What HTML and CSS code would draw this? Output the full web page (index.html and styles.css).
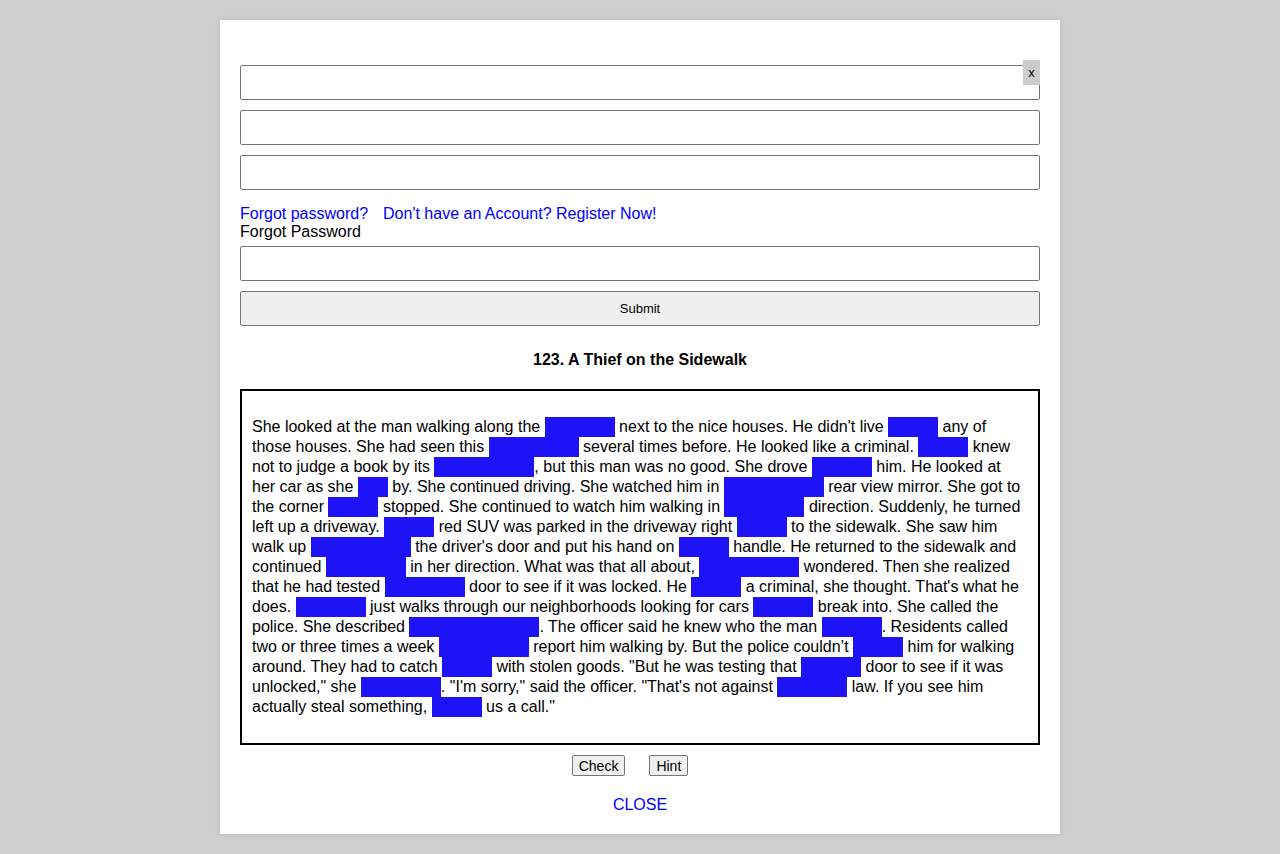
FILE: index.html
```html
<!DOCTYPE html>
<html>
<head>
<meta charset="utf-8">
<link rel="stylesheet" href="styles.css">
</head>
<body>
<div class="modal">
  <button class="x-btn">x</button>
  <input class="field first" type="text">
  <input class="field" type="text">
  <input class="field" type="password">
  <div class="links"><a href="#">Forgot password?</a><a href="#">Don't have an Account? Register Now!</a></div>
  <div class="label">Forgot Password</div>
  <input class="field forgot" type="text">
  <button class="submit">Submit</button>
  <h1 class="title">123. A Thief on the Sidewalk</h1>
  <div class="story">She looked at the man walking along the <span class="blank b70"></span> next to the nice houses. He didn't live <span class="blank b50"></span> any of those houses. She had seen this <span class="blank b90"></span> several times before. He looked like a criminal. <span class="blank b50"></span> knew not to judge a book by its <span class="blank b100"></span>, but this man was no good. She drove <span class="blank b60"></span> him. He looked at her car as she <span class="blank b30"></span> by. She continued driving. She watched him in <span class="blank b100"></span> rear view mirror. She got to the corner <span class="blank b50"></span> stopped. She continued to watch him walking in <span class="blank b80"></span> direction. Suddenly, he turned left up a driveway. <span class="blank b50"></span> red SUV was parked in the driveway right <span class="blank b50"></span> to the sidewalk. She saw him walk up <span class="blank b100"></span> the driver's door and put his hand on <span class="blank b50"></span> handle. He returned to the sidewalk and continued <span class="blank b80"></span> in her direction. What was that all about, <span class="blank b100"></span> wondered. Then she realized that he had tested <span class="blank b80"></span> door to see if it was locked. He <span class="blank b50"></span> a criminal, she thought. That's what he does. <span class="blank b70"></span> just walks through our neighborhoods looking for cars <span class="blank b60"></span> break into. She called the police. She described <span class="blank b130"></span>. The officer said he knew who the man <span class="blank b60"></span>. Residents called two or three times a week <span class="blank b90"></span> report him walking by. But the police couldn’t <span class="blank b50"></span> him for walking around. They had to catch <span class="blank b50"></span> with stolen goods. "But he was testing that <span class="blank b60"></span> door to see if it was unlocked," she <span class="blank b80"></span>. "I'm sorry," said the officer. "That's not against <span class="blank b70"></span> law. If you see him actually steal something, <span class="blank b50"></span> us a call."</div>
  <div class="actions"><button class="small-btn">Check</button><button class="small-btn">Hint</button></div>
  <div class="close-row"><a href="#" class="close-link">CLOSE</a></div>
</div>
</body>
</html>
```
FILE: styles.css
```css
html, body {
  margin: 0;
  padding: 0;
}
body {
  background: #cfcfcf;
  font-family: "Liberation Sans", Arial, sans-serif;
  font-size: 16px;
  color: #000;
}
.modal {
  position: relative;
  width: 800px;
  margin: 20px auto;
  padding: 45px 20px 20px;
  background: #fff;
  box-shadow: 0 0 6px rgba(0,0,0,0.12);
  display: flex;
  flex-direction: column;
}
.x-btn {
  position: absolute;
  top: 40px;
  right: 20px;
  width: 17px;
  height: 25px;
  padding: 0;
  border: none;
  background: #cccccc;
  font-family: "Liberation Sans", Arial, sans-serif;
  font-size: 13px;
  color: #000;
}
.field {
  box-sizing: border-box;
  width: 800px;
  height: 35px;
  margin: 0 0 10px;
  border: 1px solid #767676;
  border-radius: 2px;
  padding: 0 4px;
  font-family: "Liberation Sans", Arial, sans-serif;
  font-size: 16px;
  background: #fff;
}
.field.forgot {
  margin: 5px 0 10px;
}
.links {
  margin-top: 5px;
  line-height: 18px;
  display: flex;
  gap: 15px;
}
.links a, .close-link {
  color: #0000ff;
  text-decoration: none;
}
.label {
  line-height: 18px;
}
.submit {
  box-sizing: border-box;
  width: 800px;
  height: 35px;
  margin: 0;
  border: 1px solid #767676;
  border-radius: 2px;
  background: #efefef;
  font-family: "Liberation Sans", Arial, sans-serif;
  font-size: 13px;
  color: #000;
}
.title {
  margin: 25px 0 0;
  font-size: 16px;
  line-height: 18px;
  font-weight: bold;
  text-align: center;
}
.story {
  margin-top: 20px;
  border: 2px solid #000;
  padding: 26px 10px 26px;
  line-height: 20px;
  font-size: 16px;
}
.blank {
  display: inline-block;
  height: 20px;
  vertical-align: bottom;
  background: #1e12f6;
}
.b30 { width: 30px; }
.b50 { width: 50px; }
.b60 { width: 60px; }
.b70 { width: 70px; }
.b80 { width: 80px; }
.b90 { width: 90px; }
.b100 { width: 100px; }
.b130 { width: 130px; }
.actions {
  margin-top: 10px;
  display: flex;
  justify-content: center;
  gap: 24px;
  padding-right: 20px;
}
.small-btn {
  box-sizing: border-box;
  height: 21px;
  padding: 0 6px;
  border: 1px solid #767676;
  border-radius: 2px;
  background: #efefef;
  font-family: "Liberation Sans", Arial, sans-serif;
  font-size: 14px;
  line-height: 18px;
  color: #000;
}
.close-row {
  margin-top: 20px;
  line-height: 18px;
  text-align: center;
}
```
